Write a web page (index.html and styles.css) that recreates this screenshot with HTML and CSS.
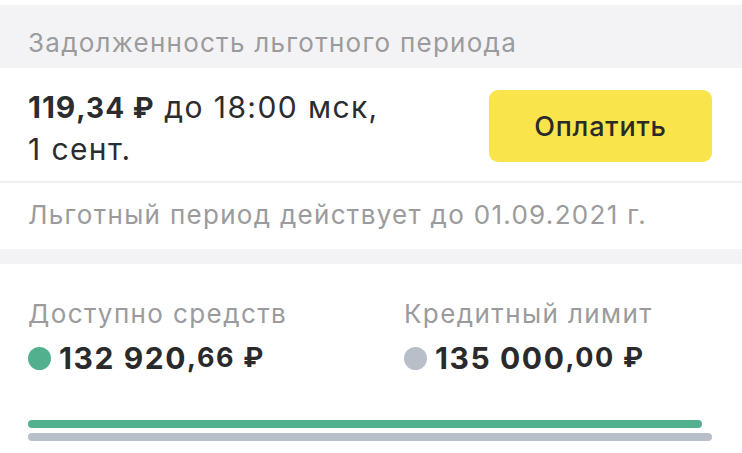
FILE: index.html
```html
<!DOCTYPE html>
<html lang="ru">
<head>
<meta charset="utf-8">
<link rel="stylesheet" href="styles.css">
</head>
<body>
<div class="screen">
  <div class="section-head">Задолженность льготного периода</div>
  <div class="debt-row">
    <div class="debt-text"><b>119<span class="debt-kop">,34 ₽</span></b> до 18:00 мск,<br>1 сент.</div>
    <button class="pay-btn">Оплатить</button>
  </div>
  <div class="note">Льготный период действует до 01.09.2021 г.</div>
  <div class="band"></div>
  <div class="limits">
    <div class="limit">
      <div class="limit-label">Доступно средств</div>
      <div class="limit-value"><span class="dot dot-green"></span>132 920<span class="kop">,66 ₽</span></div>
    </div>
    <div class="limit">
      <div class="limit-label">Кредитный лимит</div>
      <div class="limit-value"><span class="dot dot-gray"></span>135 000<span class="kop">,00 ₽</span></div>
    </div>
  </div>
  <div class="bars">
    <div class="bar bar-green" style="width: 98.5%"></div>
    <div class="bar bar-gray"></div>
  </div>
</div>
</body>
</html>
```
FILE: styles.css
```css
html, body {
  margin: 0;
  padding: 0;
  background: #ffffff;
}
.screen {
  width: 742px;
  font-family: Inter, "Noto Sans", sans-serif;
  color: #2c2c2e;
  padding-top: 5px;
}
.section-head {
  background: #f3f3f5;
  height: 63px;
  box-sizing: border-box;
  padding: 23px 0 0 28px;
  font-size: 26px;
  line-height: 30px;
  letter-spacing: 1.25px;
  color: #9b9b9d;
}
.debt-row {
  display: flex;
  justify-content: space-between;
  align-items: flex-start;
  height: 115px;
  box-sizing: border-box;
  padding: 19px 30px 0 28px;
  border-bottom: 2px solid #f0f0f2;
}
.debt-text {
  font-size: 30px;
  line-height: 41px;
  letter-spacing: 1.4px;
  color: #2c2c2e;
}
.debt-text b {
  font-weight: 700;
  letter-spacing: 1px;
}
.debt-kop {
  font-size: 28px;
}
.pay-btn {
  width: 223px;
  height: 72px;
  margin-top: 3px;
  border: none;
  border-radius: 9px;
  background: #fae44c;
  font-family: Inter, "Noto Sans", sans-serif;
  font-size: 27px;
  font-weight: 500;
  letter-spacing: 0.8px;
  color: #2a2a2a;
}
.note {
  height: 66px;
  box-sizing: border-box;
  padding: 17px 0 0 28px;
  font-size: 26px;
  line-height: 30px;
  letter-spacing: 1.3px;
  color: #9b9b9d;
}
.band {
  height: 15px;
  background: #f3f3f5;
}
.limits {
  display: grid;
  grid-template-columns: 376px 1fr;
  padding: 35px 0 0 28px;
}
.limit-label {
  font-size: 26px;
  line-height: 30px;
  letter-spacing: 1.4px;
  color: #9b9b9d;
}
.limit-value {
  display: flex;
  align-items: center;
  margin-top: 11px;
  font-size: 30px;
  line-height: 36px;
  font-weight: 700;
  letter-spacing: 1.6px;
  color: #2a2a2c;
}
.kop {
  font-size: 27px;
}
.dot {
  width: 23px;
  height: 23px;
  border-radius: 50%;
  margin-right: 8px;
  flex: none;
}
.dot-green { background: #52b08e; }
.dot-gray { background: #b8bfc9; }
.bars {
  padding: 44px 30px 0 28px;
  display: flex;
  flex-direction: column;
  gap: 5px;
}
.bar {
  height: 8px;
  border-radius: 4px;
}
.bar-green { background: #52b08e; }
.bar-gray { background: #b8bfc9; }
```
